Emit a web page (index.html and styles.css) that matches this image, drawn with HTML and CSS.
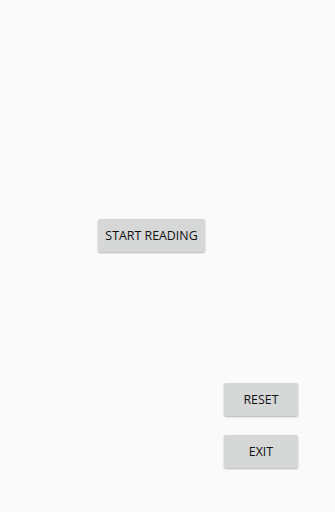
FILE: index.html
```html
<!DOCTYPE html>
<html>
<head>
<meta charset="utf-8">
<link rel="stylesheet" href="styles.css">
</head>
<body>
<div class="screen">
  <div class="start-row">
    <button class="btn btn-start">START READING</button>
  </div>
  <div class="bottom-col">
    <button class="btn btn-small">RESET</button>
    <button class="btn btn-small">EXIT</button>
  </div>
</div>
</body>
</html>
```
FILE: styles.css
```css
html, body {
  margin: 0;
  padding: 0;
  background: #fafafa;
}
.screen {
  width: 335px;
  height: 512px;
  box-sizing: border-box;
  display: flex;
  flex-direction: column;
  font-family: "Open Sans", "Liberation Sans", sans-serif;
}
.start-row {
  padding: 219px 0 0 98px;
  display: flex;
}
.bottom-col {
  display: flex;
  flex-direction: column;
  align-items: flex-end;
  padding: 131px 37px 0 0;
  gap: 19px;
}
.btn {
  border: none;
  margin: 0;
  background: #d6d7d7;
  color: #111;
  font-family: "Open Sans", "Liberation Sans", sans-serif;
  font-size: 12.4px;
  height: 33px;
  border-radius: 2px;
  box-shadow: 0 1px 2px rgba(0,0,0,0.28);
  padding: 0 0 1px 0;
  display: flex;
  align-items: center;
  justify-content: center;
}
.btn-start {
  width: 107px;
}
.btn-small {
  width: 74px;
}
```
